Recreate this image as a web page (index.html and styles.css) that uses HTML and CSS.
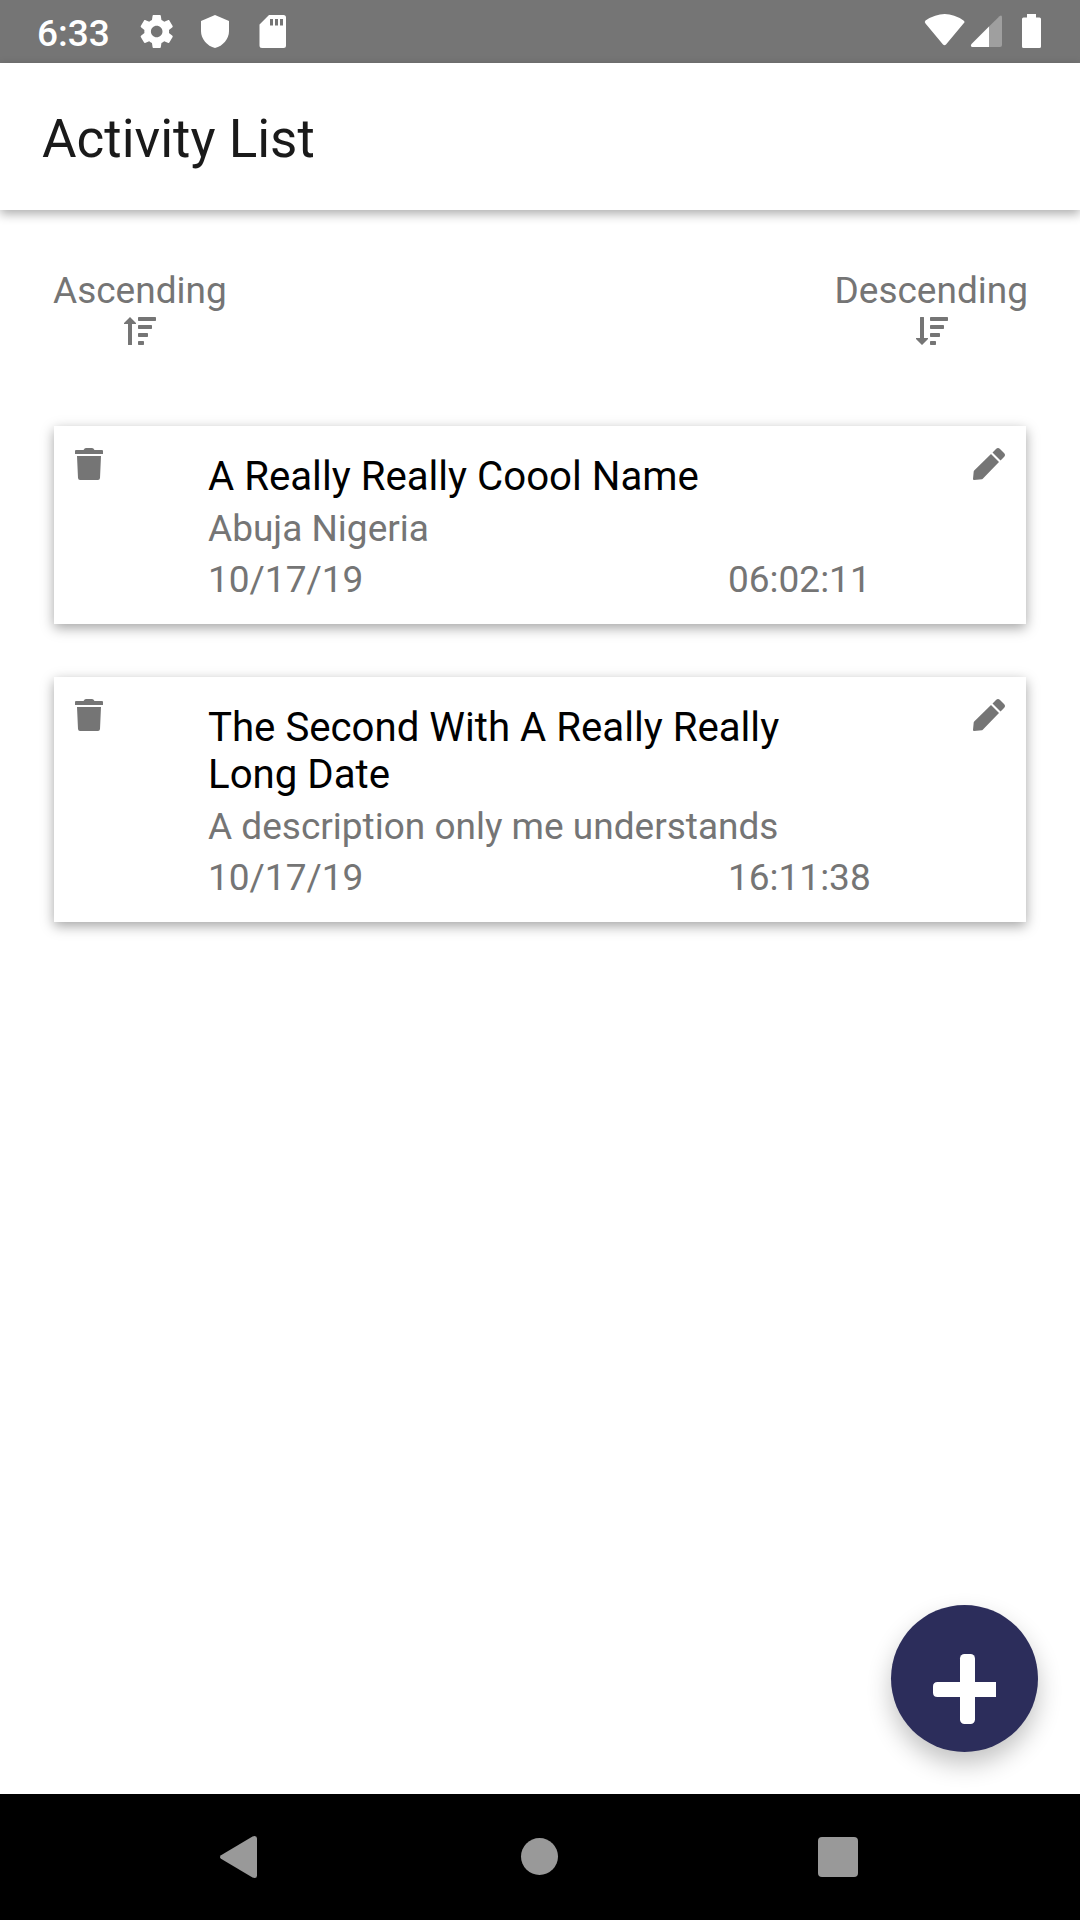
FILE: index.html
```
<!DOCTYPE html>
<html lang="en">
<head>
<meta charset="utf-8">
<title>Activity List</title>
<link rel="stylesheet" href="styles.css">
</head>
<body>
<div class="screen">
  <div class="status-bar">
    <span class="clock">6:33</span>
    <svg class="status-left" width="170" height="63" viewBox="0 0 170 63">
      <path transform="translate(11.9 11.7) scale(1.65)" fill="#fff" d="M19.43 12.98c.04-.32.07-.64.07-.98s-.03-.66-.07-.98l2.11-1.65c.19-.15.24-.42.12-.64l-2-3.46c-.12-.22-.39-.3-.61-.22l-2.49 1c-.52-.4-1.08-.73-1.69-.98l-.38-2.65C14.46 2.18 14.25 2 14 2h-4c-.25 0-.46.18-.49.42l-.38 2.65c-.61.25-1.17.59-1.69.98l-2.49-1c-.23-.09-.49 0-.61.22l-2 3.46c-.13.22-.07.49.12.64l2.11 1.65c-.04.32-.07.65-.07.98s.03.66.07.98l-2.11 1.65c-.19.15-.24.42-.12.64l2 3.46c.12.22.39.3.61.22l2.49-1c.52.4 1.08.73 1.69.98l.38 2.65c.03.24.24.42.49.42h4c.25 0 .46-.18.49-.42l.38-2.65c.61-.25 1.17-.59 1.69-.98l2.49 1c.23.09.49 0 .61-.22l2-3.46c.12-.22.07-.49-.12-.64zM12 15.5c-1.93 0-3.5-1.57-3.5-3.5s1.57-3.5 3.5-3.5 3.5 1.57 3.5 3.5-1.57 3.5-3.5 3.5z"/>
      <path fill="#fff" d="M90 15l14 6v10c0 8-6 15-14 17c-8-2-14-9-14-17V21z"/>
      <path fill="#fff" fill-rule="evenodd" d="M144 15h14.500q2.500 0 2.500 2.500v28q0 2.500-2.500 2.500h-21.500q-2.500 0-2.500-2.500v-21zM145 19v6.500h3V19zM150 19v6.500h3V19zM155 19v6.500h3V19z"/>
    </svg>
    <svg class="status-right" width="120" height="63" viewBox="0 0 120 63">
      <path fill="#fff" d="M5.500 20.500Q4 22 5.500 23.500L23 44.500q1.500 1.500 3 0L43.500 23.500Q45.500 22 43.500 20.500Q25 7.500 5.500 20.500z"/>
      <path fill="#9f9f9f" d="M69 26.500L79.500 16.200Q82 14.500 82 17.500V45q0 2-2 2H69z"/>
      <path fill="#fff" d="M69 26.500V47H52q-2-1-0.500-3z"/>
      <path fill="#fff" d="M107 14h9v3.500h3.500q1.500 0 1.500 1.500v27.500q0 1.500-1.500 1.500h-16q-1.500 0-1.500-1.500V19q0-1.500 1.500-1.500h3.500z"/>
    </svg>
  </div>
  <header class="app-bar"><h1>Activity List</h1></header>
  <main class="content">
    <div class="sort-row">
      <div class="sort">
        <span>Ascending</span>
        <svg width="32" height="28" viewBox="0 0 32 28" fill="#757575">
          <path d="M6 0L12 6V7H8V27.500q0 .5-.5.5h-3q-.5 0-.5-.5V7H0V6z"/>
          <rect x="14" y="0" width="18" height="4" rx=".7"/><rect x="14" y="8" width="14" height="4" rx=".7"/><rect x="14" y="16" width="10" height="4" rx=".7"/><rect x="14" y="24" width="6" height="4" rx=".7"/>
        </svg>
      </div>
      <div class="sort sort-desc">
        <span>Descending</span>
        <svg width="32" height="28" viewBox="0 0 32 28" fill="#757575">
          <path d="M6 28L12 22V21H8V.5Q8 0 7.500 0h-3Q4 0 4 .5V21H0V22z"/>
          <rect x="14" y="0" width="18" height="4" rx=".7"/><rect x="14" y="8" width="14" height="4" rx=".7"/><rect x="14" y="16" width="10" height="4" rx=".7"/><rect x="14" y="24" width="6" height="4" rx=".7"/>
        </svg>
      </div>
    </div>
    <article class="card">
      <svg class="icon" width="32" height="32" viewBox="0 0 32 32" fill="#757575"><path d="M3 2H10.500Q11.500 0 13 0h6q1.500 0 2.500 2H29q1 0 1 1V6H2V3q0-1 1-1zM4 8H28L27 30q-.2 2-2 2H7q-1.800 0-2-2z"/></svg>
      <div class="details">
        <h2>A Really Really Coool Name</h2>
        <p>Abuja Nigeria</p>
        <div class="when"><span>10/17/19</span><span>06:02:11</span></div>
      </div>
      <svg class="icon" width="32" height="32" viewBox="0 0 32 32" fill="#757575"><path d="M18 6L26 14L10 30.500Q9.500 31 9 31.200L1 32Q0 32 0 31L.7 23.500Q.8 23 1.200 22.500zM19.500 4.500L23 1Q25 -.8 27 1L31 5Q33 7 31 9L27.500 12.500z"/></svg>
    </article>
    <article class="card">
      <svg class="icon" width="32" height="32" viewBox="0 0 32 32" fill="#757575"><path d="M3 2H10.500Q11.500 0 13 0h6q1.500 0 2.500 2H29q1 0 1 1V6H2V3q0-1 1-1zM4 8H28L27 30q-.2 2-2 2H7q-1.800 0-2-2z"/></svg>
      <div class="details">
        <h2>The Second With A Really Really Long Date</h2>
        <p>A description only me understands</p>
        <div class="when"><span>10/17/19</span><span>16:11:38</span></div>
      </div>
      <svg class="icon" width="32" height="32" viewBox="0 0 32 32" fill="#757575"><path d="M18 6L26 14L10 30.500Q9.500 31 9 31.200L1 32Q0 32 0 31L.7 23.500Q.8 23 1.200 22.500zM19.500 4.500L23 1Q25 -.8 27 1L31 5Q33 7 31 9L27.500 12.500z"/></svg>
    </article>
    <button class="fab" aria-label="Add activity">
      <svg width="63" height="70" viewBox="0 0 63 70" fill="#fff"><rect x="27" width="15" height="70" rx="4.500"/><path d="M63 28V43H4.500Q0 43 0 38.500V32.500Q0 28 4.500 28z"/></svg>
    </button>
  </main>
  <nav class="nav-bar">
    <svg width="1080" height="126" viewBox="0 0 1080 126" fill="#999">
      <path d="M221 61.200L252.500 42.400Q257 41 257 44.500V81.500Q257 85 252.500 83.600L221 64.800Q219 63 221 61.200z"/>
      <circle cx="539.500" cy="62.500" r="18.500"/>
      <rect x="818" y="43" width="40" height="40" rx="4"/>
    </svg>
  </nav>
</div>
</body>
</html>
```
FILE: styles.css
```
* { box-sizing: border-box; margin: 0; padding: 0; }
body { width: 1080px; height: 1920px; overflow: hidden; background: #fff; font-family: Roboto, sans-serif; }
.screen { display: flex; flex-direction: column; height: 1920px; }
.status-bar { display: flex; height: 63px; background: #757575; color: #fff; padding-left: 37px; }
.clock { width: 88px; font-size: 37px; font-weight: 500; line-height: 67px; }
.status-right { margin-left: auto; margin-right: 40px; overflow: visible; }
.app-bar { height: 147px; padding: 44px 42px 0; background: #fff; box-shadow: 0 4px 10px rgba(0,0,0,.32); }
h1 { font-size: 53px; font-weight: 400; line-height: 65px; color: #1a1a1a; }
.content { flex: 1; padding: 60px 54px 0; display: flex; flex-direction: column; }
.sort-row { display: flex; justify-content: space-between; color: #757575; height: 156px; margin: 0 -2px 0 -1px; }
.sort { display: flex; flex-direction: column; align-items: center; gap: 5px; font-size: 37px; line-height: 42px; }
.sort-desc svg { margin-left: 2px; }
.card { display: flex; justify-content: space-between; margin-bottom: 53px; padding: 22px 21px 19px 19px; background: #fff; box-shadow: 0 4px 12px rgba(0,0,0,.36); }
.details { width: 664px; margin-left: 103px; padding-top: 5px; margin-right: auto; }
h2 { font-size: 40.2px; font-weight: 400; line-height: 47px; color: #000; padding-right: 60px; margin-bottom: 3px; }
p, .when { font-size: 37px; line-height: 51px; color: #757575; }
.when { display: grid; grid-template-columns: 520px 1fr; }
.fab { display: flex; align-items: center; justify-content: center; width: 147px; height: 147px; border: 0; border-radius: 50%; background: #2c2d5b; margin: auto -12px 42px auto; padding-top: 21px; box-shadow: 0 12px 24px rgba(0,0,0,.24); }
.nav-bar { height: 126px; background: #000; }
```
